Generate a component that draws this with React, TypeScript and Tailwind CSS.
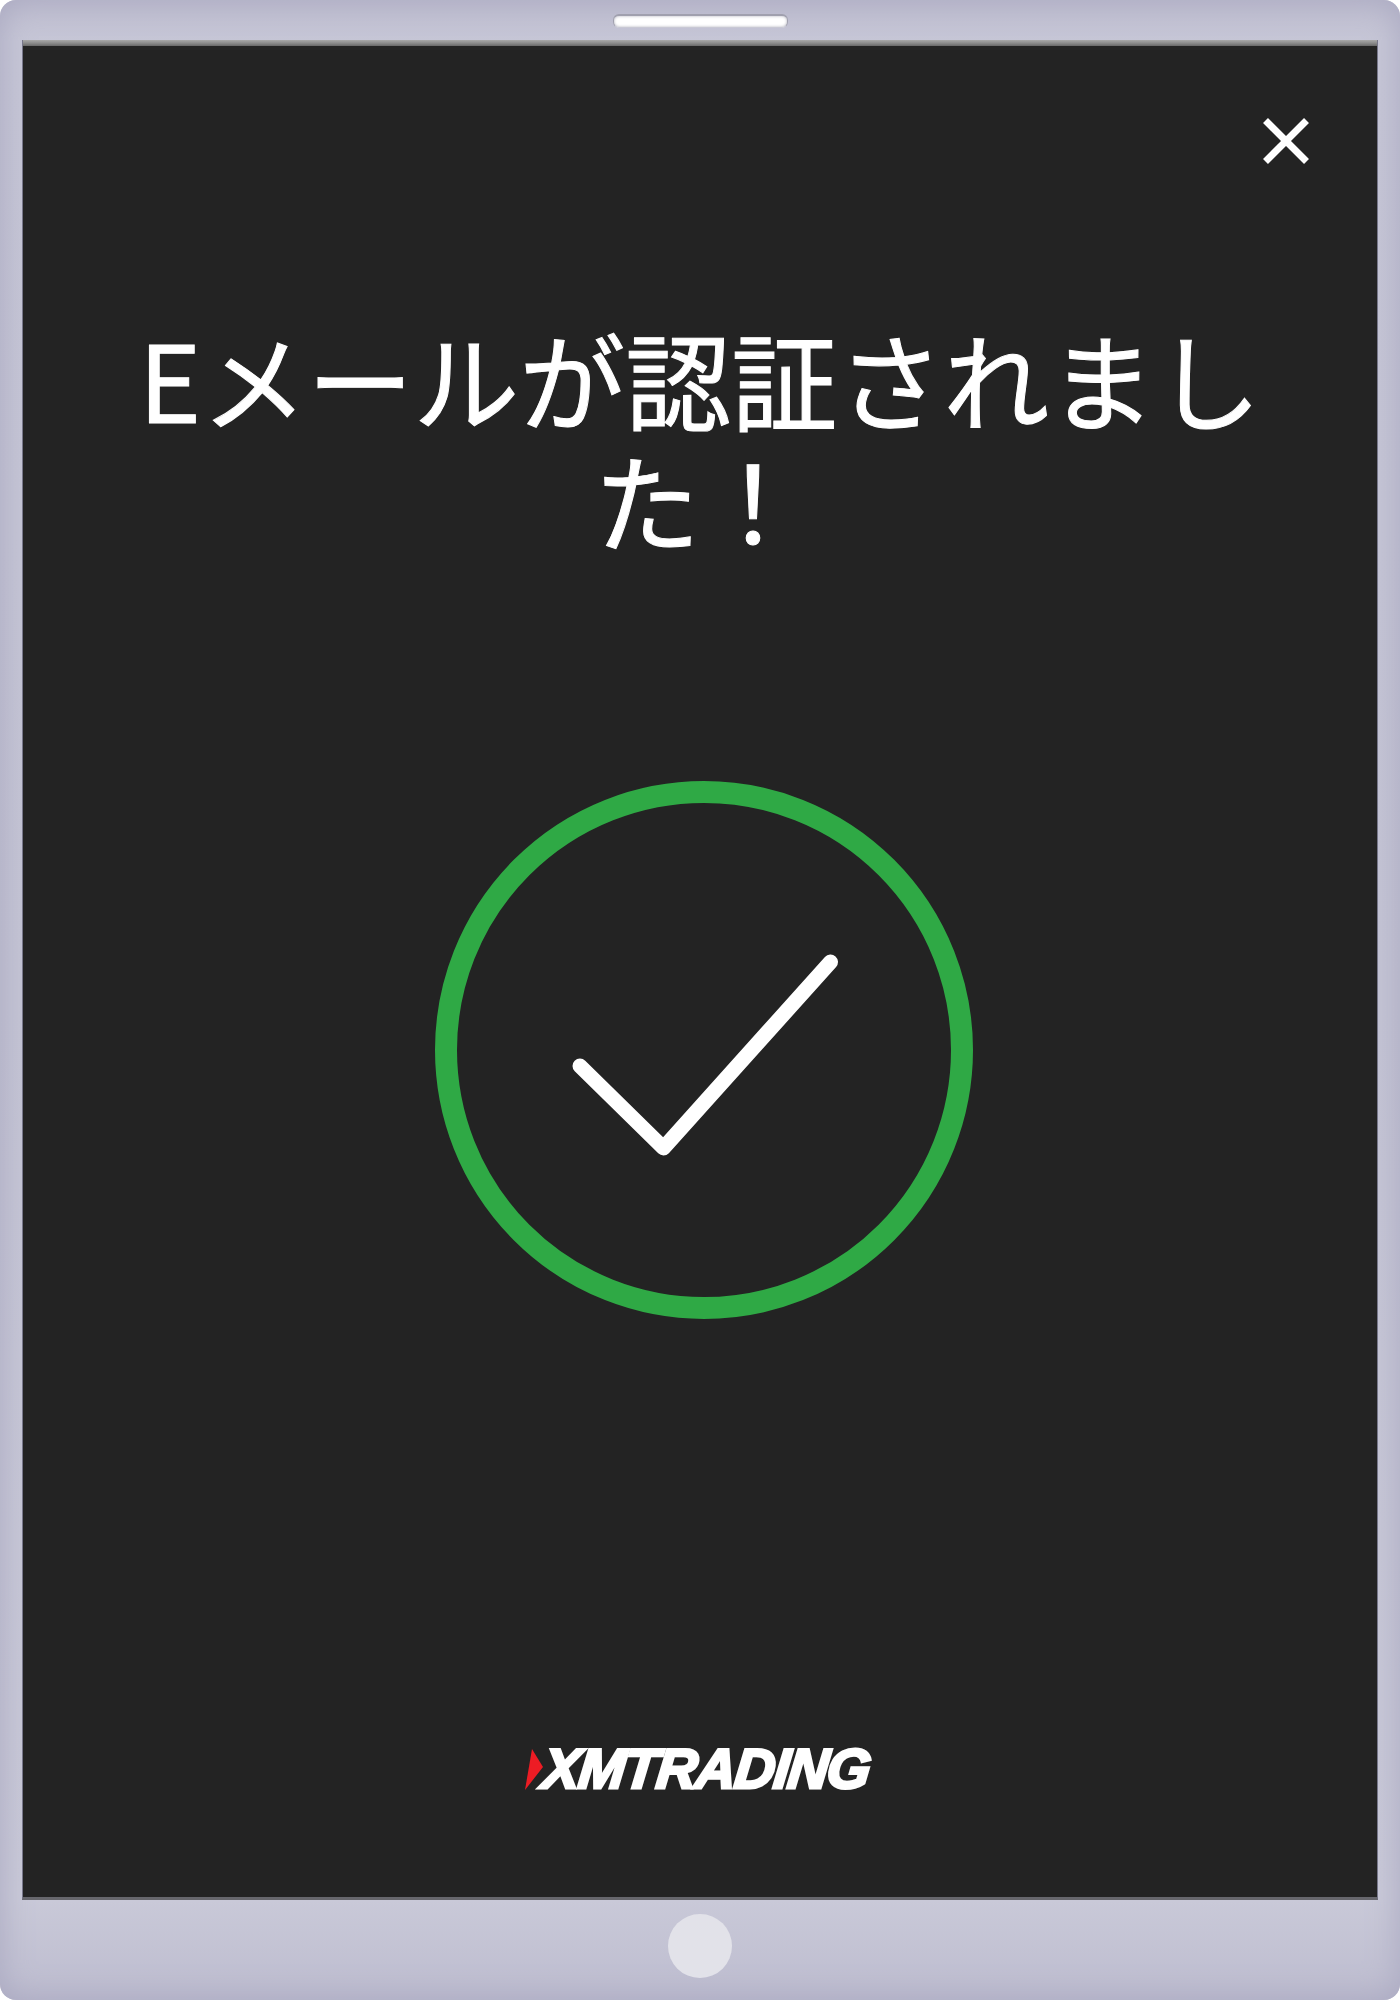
export default function App() {
  return (
    <div className="w-[1400px] h-[2000px] bg-white overflow-hidden">
      <div className="relative flex flex-col w-full h-full rounded-[16px] overflow-hidden bg-[linear-gradient(180deg,#bfbed0_0%,#c6c6d6_2%,#c4c4d4_50%,#c9c9d8_95%,#bdbccf_100%)] shadow-[inset_0_0_32px_#a9a8c0]">
        <div className="h-[40px] shrink-0 flex justify-center pt-[14px]">
          <div className="w-[175px] h-[14px] rounded-[6px] bg-white border-t-2 border-x border-[#a0a0ae] border-b border-b-[#c8c8d4] shadow-[inset_0_0_3px_#b0b0bc]" />
        </div>
        <div className="relative flex-1 mx-[22px] flex flex-col items-center bg-[#232323] border-l border-r border-b-[3px] border-x-[#77778a] border-b-[#66666c]">
          <div className="w-full h-[6px] shrink-0 bg-[linear-gradient(180deg,#a8a8a8,#8c8c8c_50%,#686868)]" />
          <svg className="absolute left-[1240px] top-[78px]" width="46" height="46" viewBox="0 0 46 46" fill="none" stroke="#ffffff" strokeWidth="7">
            <path d="M2.500 2.500L43.500 43.500M43.500 2.500L2.500 43.500" />
          </svg>
          <h1 className="w-[1150px] mt-[271px] text-center text-white text-[106px] leading-[121px] font-normal tracking-[0px] [-webkit-text-stroke:1px_#ffffff] [font-family:'Noto_Sans_CJK_JP','Noto_Sans',sans-serif]">
            Eメールが認証されました！
          </h1>
          <svg className="mt-[222px] ml-[8px] shrink-0" width="538" height="538" viewBox="0 0 538 538" fill="none">
            <circle cx="269" cy="269" r="258" stroke="#2fa945" strokeWidth="22" />
            <path d="M145 285L228.500 367L395.500 181" stroke="#ffffff" strokeWidth="15" strokeLinecap="round" strokeLinejoin="round" />
          </svg>
          <div className="flex items-center mt-[428px] ml-[-6px]">
            <svg width="20" height="44" viewBox="0 0 20 44" className="mr-[-1px]">
              <path d="M8 2L19 20L1 43Z" fill="#ed1c24" />
            </svg>
            <span className="text-white text-[56px] leading-[44px] font-bold italic tracking-[-1.400px] [font-family:'Liberation_Sans',sans-serif] [-webkit-text-stroke:3px_#ffffff] [transform:skewX(-6deg)]">
              XMTRADING
            </span>
          </div>
        </div>
        <div className="h-[100px] shrink-0 flex justify-center pt-[14px]">
          <div className="w-[64px] h-[64px] rounded-full bg-[#e2e2e9]" />
        </div>
      </div>
    </div>
  );
}
